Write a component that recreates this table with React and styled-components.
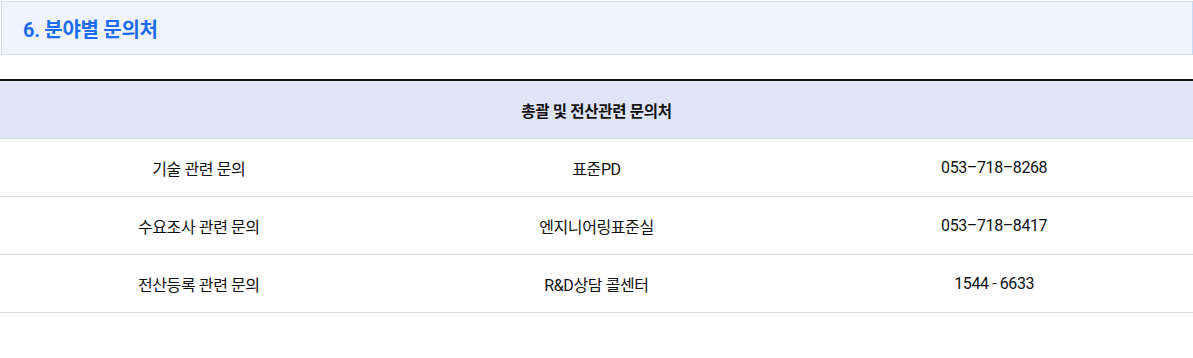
import React from 'react'
import styled, { createGlobalStyle } from 'styled-components'

const GlobalStyle = createGlobalStyle`
  html, body {
    margin: 0;
    padding: 0;
    background: #fff;
  }
  body {
    font-family: Roboto, "Noto Sans CJK KR", "Noto Sans", sans-serif;
    color: #111;
  }
`

const Page = styled.div`
  width: 1193px;
  padding-top: 1px;
`

const TitleBox = styled.div`
  margin-left: 1px;
  height: 52px;
  display: flex;
  align-items: center;
  padding-left: 21px;
  background: #eef3fe;
  border: 1px solid #c9dbf4;
  box-sizing: content-box;
`

const Title = styled.h3`
  margin: 0;
  font-size: 20px;
  font-weight: 700;
  color: #1b6cf2;
  letter-spacing: -0.3px;
`

const Table = styled.table`
  width: 100%;
  margin-top: 24px;
  border-collapse: collapse;
  table-layout: fixed;
  border-top: 2px solid #111;
`

const HeadCell = styled.th`
  height: 57px;
  padding: 0;
  background: #dfe5f7;
  font-size: 15.5px;
  font-weight: 700;
  color: #111;
  text-align: center;
  border-bottom: 1px solid #dcdcdc;
  letter-spacing: -0.3px;
`

const Cell = styled.td`
  height: 57px;
  padding: 0;
  font-size: 16px;
  font-weight: 400;
  color: #111;
  text-align: center;
  border-bottom: 1px solid #dcdcdc;
  letter-spacing: -0.4px;
`

const rows = [
  ['기술 관련 문의', '표준PD', '053–718–8268'],
  ['수요조사 관련 문의', '엔지니어링표준실', '053–718–8417'],
  ['전산등록 관련 문의', 'R&D상담 콜센터', '1544 - 6633']
]

const App = () => (
  <Page>
    <GlobalStyle />
    <TitleBox>
      <Title>6. 분야별 문의처</Title>
    </TitleBox>
    <Table>
      <thead>
        <tr>
          <HeadCell colSpan={3}>총괄 및 전산관련 문의처</HeadCell>
        </tr>
      </thead>
      <tbody>
        {rows.map((row) => (
          <tr key={row[0]}>
            {row.map((v) => (
              <Cell key={v}>{v}</Cell>
            ))}
          </tr>
        ))}
      </tbody>
    </Table>
  </Page>
)

export default App
